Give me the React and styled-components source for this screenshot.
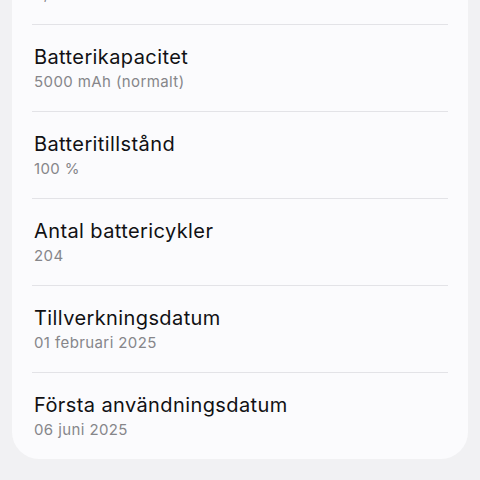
import React from 'react'
import styled, { createGlobalStyle } from 'styled-components'

const GlobalStyle = createGlobalStyle`
  html, body {
    margin: 0;
    padding: 0;
    background: #f1f1f3;
  }
`

const rows = [
  { title: 'Batterispänning', value: '4,1 V' },
  { title: 'Batterikapacitet', value: '5000 mAh (normalt)' },
  { title: 'Batteritillstånd', value: '100 %' },
  { title: 'Antal battericykler', value: '204' },
  { title: 'Tillverkningsdatum', value: '01 februari 2025' },
  { title: 'Första användningsdatum', value: '06 juni 2025' },
]

function App() {
  return (
    <>
      <GlobalStyle />
      <Page>
        <Card>
          {rows.map((r, i) => (
            <Row key={r.title} first={i === 0}>
              <Title>{r.title}</Title>
              <Value>{r.value}</Value>
            </Row>
          ))}
        </Card>
      </Page>
    </>
  )
}

const Page = styled.div`
  width: 480px;
  height: 480px;
  overflow: hidden;
  background: #f1f1f3;
  font-family: Inter, "Noto Sans", sans-serif;
`

const Card = styled.div`
  margin: -63px 12px 0;
  padding: 0 20px;
  background: #fbfbfd;
  border-radius: 0 0 27px 27px;
`

const Row = styled.div`
  display: flex;
  flex-direction: column;
  padding: 19px 0 0 2px;
  height: 87px;
  box-sizing: border-box;
  border-top: ${p => (p.first ? 'none' : '1px solid #e3e3e7')};
`

const Title = styled.div`
  font-size: 20px;
  line-height: 26px;
  letter-spacing: 0.4px;
  color: #111114;
`

const Value = styled.div`
  font-size: 15px;
  line-height: 24px;
  letter-spacing: 0.4px;
  color: #86868a;
`

export default App
